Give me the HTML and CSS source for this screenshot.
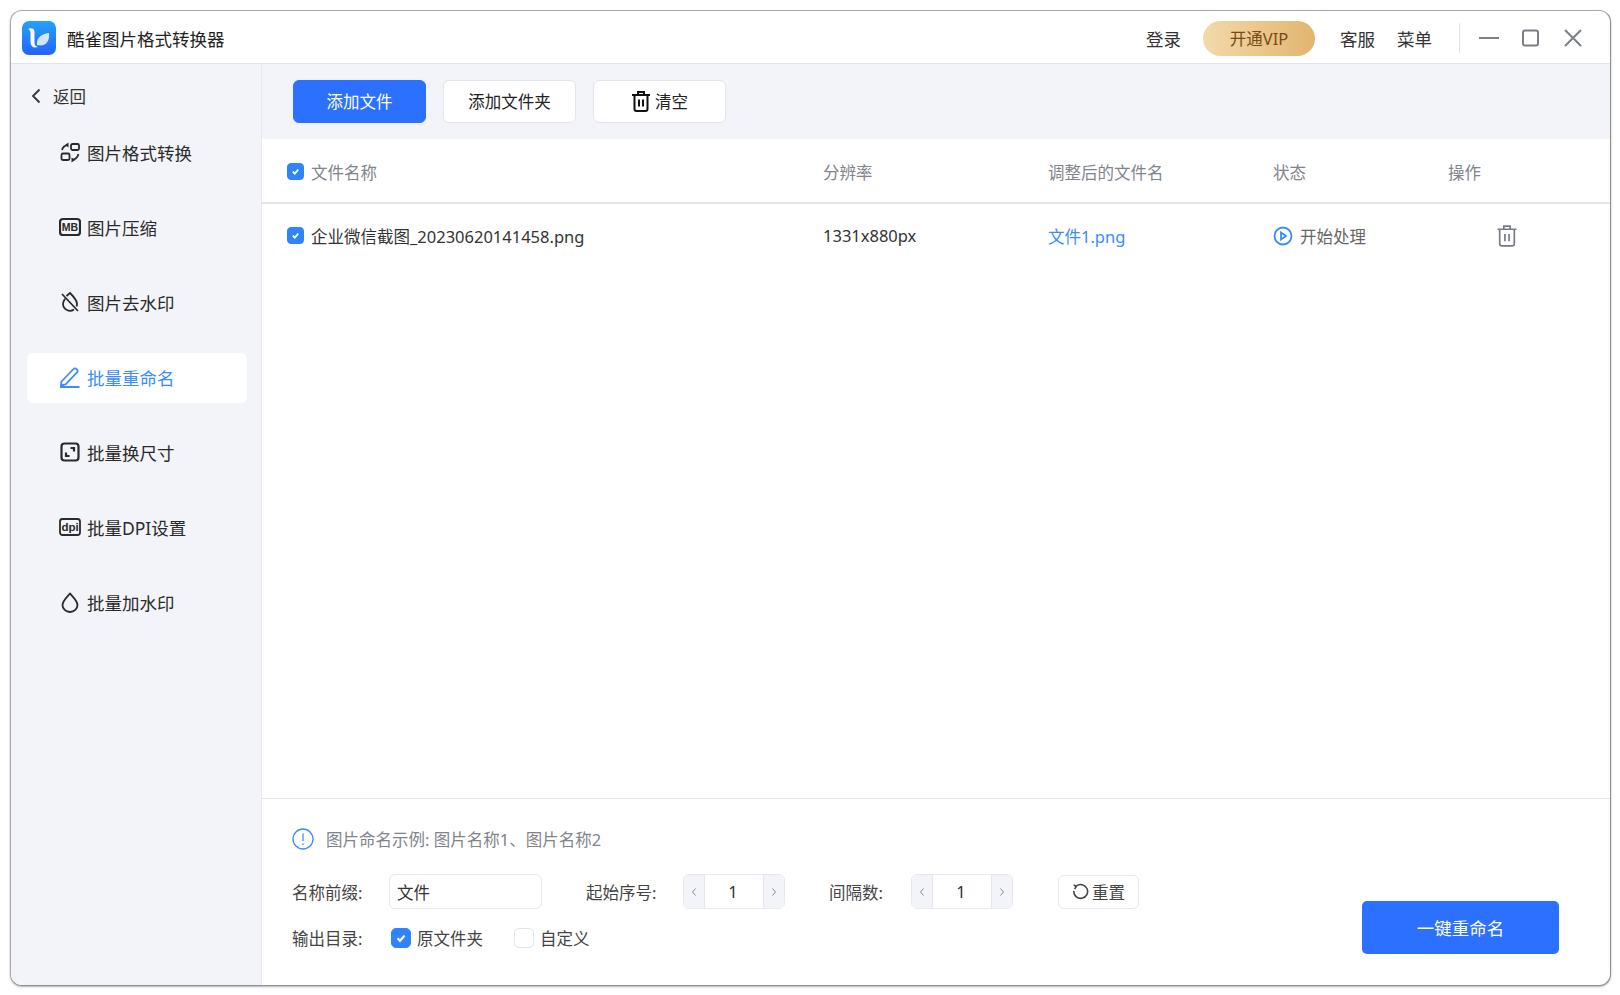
FILE: index.html
```html
<!DOCTYPE html>
<html lang="zh-CN">
<head>
<meta charset="UTF-8">
<meta name="viewport" content="width=device-width, initial-scale=1.0">
<title>酷雀图片格式转换器</title>
<link rel="stylesheet" href="styles.css">
</head>
<body>
<div class="window">
    <header class="titlebar">
        <svg class="logo" viewBox="0 0 34 34">
            <defs>
                <linearGradient id="logoBg" x1="0" y1="0" x2="0" y2="1">
                    <stop offset="0" stop-color="#23a2fb"/>
                    <stop offset="1" stop-color="#2463fb"/>
                </linearGradient>
            </defs>
            <rect width="34" height="34" rx="7" fill="url(#logoBg)"/>
            <path d="M6 8c3-1.500 6-.5 6.500 2.500v11c0 2.500 1.500 4 3.500 4.500-4 1.500-7.500-.5-7.500-5V12c0-2-1-3.500-2.500-4z" fill="#fff"/>
            <path d="M15 24c-1-6 3-11 12-12 1 8-3 14-12 12z" fill="#fff" fill-opacity=".8"/>
        </svg>
        <span class="app-name">酷雀图片格式转换器</span>
        <nav class="title-actions">
            <span class="login">登录</span>
            <span class="vip">开通VIP</span>
            <span class="service">客服</span>
            <span class="menu">菜单</span>
        </nav>
        <div class="win-controls">
            <svg class="win-icon" viewBox="0 0 20 20"><path d="M0 10h20"/></svg>
            <svg class="win-icon" viewBox="0 0 20 20"><rect x="2" y="2.500" width="15" height="15" rx="2"/></svg>
            <svg class="win-icon" viewBox="0 0 20 20"><path d="M2 2l16 16M18 2L2 18"/></svg>
        </div>
    </header>

    <div class="body-row">
        <aside class="sidebar">
            <div class="back">
                <svg class="back-icon" viewBox="0 0 10 16"><path d="M8.500 1.500L2 8l6.500 6.500"/></svg>
                <span>返回</span>
            </div>
            <ul class="side-list">
                <li class="side-item">
                    <svg class="side-icon" viewBox="0 0 22 22"><rect x="12" y="3" width="8" height="6" rx="1.500"/><rect x="2.500" y="12.500" width="8" height="6.500" rx="1.500"/><path d="M9 3.800C6 4.200 3.800 6 3 9M13 19c3-.5 5.500-2.500 6.500-6"/><path class="solid" d="M9.500 1.500v5L6 4zM12.500 16.500v5l3.500-2.500z"/></svg>
                    <span>图片格式转换</span>
                </li>
                <li class="side-item">
                    <svg class="side-icon side-icon-bold" viewBox="0 0 22 22"><rect x="1" y="3" width="20" height="16" rx="3"/><text class="mb-text" x="11" y="14.800">MB</text></svg>
                    <span>图片压缩</span>
                </li>
                <li class="side-item">
                    <svg class="side-icon" viewBox="0 0 22 22"><path d="M7.500 5L11 2c3 3 7 7 7 11a6 6 0 0 1-.5 2.500M15 18.500A7 7 0 0 1 4 13c0-2 1-3.800 2-5.300M3 3l16 17"/></svg>
                    <span>图片去水印</span>
                </li>
                <li class="side-item active">
                    <svg class="side-icon" viewBox="0 0 22 22"><path d="M2.500 15.500L14.500 3a2 2 0 0 1 3 0l.5.500a2 2 0 0 1 0 3L6.500 18.500l-4.500 1zM1 21h19.500"/></svg>
                    <span>批量重命名</span>
                </li>
                <li class="side-item">
                    <svg class="side-icon side-icon-bold" viewBox="0 0 22 22"><rect x="2.500" y="2.500" width="17" height="17" rx="3"/><path d="M11.500 7h3.500v3.500M7 11.500V15h3.500"/></svg>
                    <span>批量换尺寸</span>
                </li>
                <li class="side-item">
                    <svg class="side-icon" viewBox="0 0 22 22"><rect x="1" y="3" width="20" height="16" rx="2.500"/><text class="dpi-text" x="11" y="14.500">dpi</text></svg>
                    <span>批量DPI设置</span>
                </li>
                <li class="side-item">
                    <svg class="side-icon" viewBox="0 0 22 22"><path d="M11 2.500c3.500 4 7.500 7.500 7.500 11.500a7.500 7 0 0 1-15 0c0-4 4-7.500 7.500-11.500z"/></svg>
                    <span>批量加水印</span>
                </li>
            </ul>
        </aside>

        <main class="content">
            <div class="toolbar">
                <button class="btn btn-primary">添加文件</button>
                <button class="btn">添加文件夹</button>
                <button class="btn btn-clear">
                    <svg class="trash-dark" viewBox="0 0 20 22"><path d="M1 5h18M7 5V2h6v3M3.500 5v14a2 2 0 0 0 2 2h9a2 2 0 0 0 2-2V5M8 9.500v7M12 9.500v7"/></svg>
                    清空
                </button>
            </div>

            <div class="table-head">
                <div class="cell-name">
                    <span class="check checked"><svg viewBox="0 0 10 10"><path d="M2.500 5.200l1.800 1.800 3.200-3.700"/></svg></span>
                    文件名称
                </div>
                <div>分辨率</div>
                <div>调整后的文件名</div>
                <div>状态</div>
                <div>操作</div>
            </div>
            <div class="table-row">
                <div class="cell-name">
                    <span class="check checked"><svg viewBox="0 0 10 10"><path d="M2.500 5.200l1.800 1.800 3.200-3.700"/></svg></span>
                    企业微信截图_20230620141458.png
                </div>
                <div>1331x880px</div>
                <div class="new-name">文件1.png</div>
                <div class="status">
                    <svg class="play" viewBox="0 0 20 20"><circle cx="10" cy="10" r="8.500"/><path d="M8 6.500l5 3.500-5 3.500z"/></svg>
                    开始处理
                </div>
                <div class="cell-op">
                    <svg class="trash-grey" viewBox="0 0 20 22"><path d="M1 5h18M7 5V2h6v3M3 5v14a2 2 0 0 0 2 2h10a2 2 0 0 0 2-2V5M8 9.500v7M12 9.500v7"/></svg>
                </div>
            </div>

            <footer class="panel">
                <div class="panel-left">
                    <div class="hint">
                        <svg class="hint-icon" viewBox="0 0 22 22"><circle cx="11" cy="11" r="10"/><path d="M11 5.500v7.500M11 15.500v1.500"/></svg>
                        图片命名示例: 图片名称1、图片名称2
                    </div>
                    <div class="form-row">
                        <label class="form-label">名称前缀:</label>
                        <div class="text-input">文件</div>
                        <label class="form-label label-start">起始序号:</label>
                        <div class="stepper">
                            <span class="step"><svg viewBox="0 0 6 10"><path d="M4.500 1.500L1.500 5l3 3.500"/></svg></span>
                            <span class="step-value">1</span>
                            <span class="step"><svg viewBox="0 0 6 10"><path d="M1.500 1.500l3 3.500-3 3.500"/></svg></span>
                        </div>
                        <label class="form-label label-gap">间隔数:</label>
                        <div class="stepper">
                            <span class="step"><svg viewBox="0 0 6 10"><path d="M4.500 1.500L1.500 5l3 3.500"/></svg></span>
                            <span class="step-value">1</span>
                            <span class="step"><svg viewBox="0 0 6 10"><path d="M1.500 1.500l3 3.500-3 3.500"/></svg></span>
                        </div>
                        <button class="reset">
                            <svg class="reset-icon" viewBox="0 0 16 16"><path d="M4 3a6.500 6.500 0 1 1-2.300 4.500M1.500 1.800L4 3.200 2.500 5.800"/></svg>
                            重置
                        </button>
                    </div>
                    <div class="form-row output-row">
                        <label class="form-label">输出目录:</label>
                        <span class="check check-big checked"><svg viewBox="0 0 10 10"><path d="M2.500 5.200l1.800 1.800 3.200-3.700"/></svg></span>
                        <span class="opt-text">原文件夹</span>
                        <span class="check check-big"></span>
                        <span class="opt-text">自定义</span>
                    </div>
                </div>
                <button class="run">一键重命名</button>
            </footer>
        </main>
    </div>
</div>
</body>
</html>
```

FILE: styles.css
```css
* {
    box-sizing: border-box;
}

body {
    margin: 0;
    padding: 10px 9px 9px 10px;
    height: 995px;
    background-color: #fff;
    font-family: "Noto Sans", "Noto Sans CJK SC", sans-serif;
    font-size: 16.5px;
    color: #333;
    overflow: hidden;
}

svg {
    display: block;
    flex: none;
    fill: none;
    stroke: currentColor;
}

button {
    font-family: inherit;
}

.window {
    height: 100%;
    border: 1px solid #a8a8a8;
    border-bottom-color: #8f8f8f;
    border-right-color: #8f8f8f;
    border-radius: 12px;
    overflow: hidden;
    display: flex;
    flex-direction: column;
    background-color: #fff;
    box-shadow: 0 1px 2px rgba(0, 0, 0, .3);
}

/* title bar */
.titlebar {
    height: 53px;
    flex: none;
    display: flex;
    align-items: center;
    padding: 2px 0 0 11px;
    border-bottom: 1px solid #e2e3ec;
}

.logo {
    width: 34px;
    height: 34px;
    stroke: none;
}

.app-name {
    margin-left: 11px;
    font-size: 17.5px;
    color: #222;
}

.title-actions {
    margin-left: auto;
    display: flex;
    align-items: center;
    font-size: 17.5px;
    color: #333;
}

.vip {
    width: 112px;
    height: 35px;
    margin: 0 25px 0 22px;
    border-radius: 18px;
    background: linear-gradient(90deg, #f3d9ab, #e2b56f);
    color: #7a4a16;
    font-size: 16.5px;
    display: flex;
    align-items: center;
    justify-content: center;
}

.menu {
    margin-left: 22px;
}

.win-controls {
    display: flex;
    align-items: center;
    gap: 22px;
    margin-left: 27px;
    margin-right: 27px;
    padding-left: 19px;
    height: 30px;
    border-left: 1px solid #dfe0e6;
    color: #7c7f88;
}

.win-icon {
    width: 20px;
    height: 20px;
    stroke-width: 2;
}

.body-row {
    flex: 1;
    display: flex;
    min-height: 0;
}

/* sidebar */
.sidebar {
    width: 251px;
    flex: none;
    background-color: #f3f4f9;
    border-right: 1px solid #e6e7f0;
    padding: 0 14px 0 16px;
}

.back {
    height: 64px;
    padding: 0 0 0 4px;
    display: flex;
    align-items: center;
    gap: 12px;
    color: #333;
}

.back-icon {
    width: 10px;
    height: 16px;
    stroke-width: 1.800;
}

.side-list {
    list-style: none;
    margin: 0;
    padding: 0;
    display: flex;
    flex-direction: column;
    gap: 25px;
}

.side-item {
    height: 50px;
    padding: 0 0 2px 32px;
    display: flex;
    align-items: center;
    gap: 6px;
    font-size: 17.5px;
    color: #2a2a2a;
    border-radius: 6px;
}

.side-item.active {
    background-color: #fff;
    color: #3a8bff;
}

.side-icon {
    width: 22px;
    height: 22px;
    stroke-width: 1.800;
}

.side-icon-bold {
    stroke-width: 2.200;
}

.solid {
    fill: currentColor;
    stroke: none;
}

.mb-text,
.dpi-text {
    font-family: "Liberation Sans", sans-serif;
    text-anchor: middle;
    fill: currentColor;
    stroke: none;
}

.mb-text {
    font-size: 10.500px;
    font-weight: 700;
}

.dpi-text {
    font-size: 11.500px;
    font-weight: 700;
}

/* main */
.content {
    flex: 1;
    min-width: 0;
    display: flex;
    flex-direction: column;
}

.toolbar {
    height: 75px;
    flex: none;
    padding: 16px 0 0 31px;
    background-color: #f3f4f9;
    display: flex;
    align-items: flex-start;
    gap: 17px;
}

.btn {
    width: 133px;
    height: 43px;
    border: 1.500px solid #e3e4ed;
    border-radius: 6px;
    background-color: #fff;
    color: #222;
    font-size: 16.5px;
    display: flex;
    align-items: center;
    justify-content: center;
    gap: 4px;
    padding: 0 0 1px;
}

.btn-primary {
    border-color: #2b70ff;
    background-color: #2b70ff;
    color: #fff;
}

.trash-dark {
    width: 20px;
    height: 22px;
    stroke-width: 2;
    color: #111;
}

.table-head,
.table-row {
    display: grid;
    grid-template-columns: 536px 225px 225px 175px 1fr;
    align-items: center;
    padding-left: 25px;
    flex: none;
}

.table-head {
    height: 65px;
    padding-top: 2px;
    border-bottom: 2px solid #e3e3ee;
    color: #82848c;
}

.table-row {
    height: 67px;
    padding-bottom: 4px;
    color: #333;
}

.cell-name {
    display: flex;
    align-items: center;
    gap: 7px;
}

.check {
    width: 17px;
    height: 17px;
    flex: none;
    border-radius: 4px;
    border: 1.500px solid #e3e3ee;
    display: flex;
    align-items: center;
    justify-content: center;
    color: #fff;
}

.check svg {
    width: 11px;
    height: 11px;
    stroke-width: 1.600;
}

.check.checked {
    background-color: #2f83fb;
    border-color: #2f83fb;
}

.check-big {
    width: 20px;
    height: 20px;
    border-radius: 5px;
}

.check-big svg {
    width: 14px;
    height: 14px;
}

.new-name {
    color: #3a8bff;
}

.status {
    display: flex;
    align-items: center;
    gap: 7px;
    color: #666;
}

.play {
    width: 20px;
    height: 20px;
    stroke-width: 1.800;
    color: #3a8bff;
}

.cell-op {
    padding-left: 48px;
}

.trash-grey {
    width: 22px;
    height: 23px;
    stroke-width: 1.600;
    color: #777a84;
}

/* bottom panel */
.panel {
    flex: none;
    height: 187px;
    margin-top: auto;
    border-top: 1px solid #e6e7ee;
    padding: 29px 51px 31px 30px;
    display: flex;
    justify-content: space-between;
}

.panel-left {
    display: flex;
    flex-direction: column;
}

.hint {
    display: flex;
    align-items: center;
    gap: 12px;
    height: 22px;
    color: #82848c;
}

.hint-icon {
    width: 22px;
    height: 22px;
    stroke-width: 1.300;
    color: #3a8bff;
}

.form-row {
    display: flex;
    align-items: center;
    margin-top: 24px;
    height: 35px;
}

.output-row {
    margin-top: 17px;
    height: 24px;
}

.form-label {
    width: 97px;
    flex: none;
    color: #444;
}

.text-input {
    width: 153px;
    height: 35px;
    border: 1.500px solid #e8e8f0;
    border-radius: 6px;
    padding-left: 7px;
    display: flex;
    align-items: center;
    color: #333;
}

.label-start {
    margin-left: 44px;
}

.label-gap {
    width: 82px;
    margin-left: 44px;
}

.stepper {
    width: 102px;
    height: 35px;
    border: 1.500px solid #e8e8f0;
    border-radius: 6px;
    overflow: hidden;
    display: flex;
    flex: none;
}

.step {
    width: 20px;
    flex: none;
    background-color: #f3f4f9;
    color: #888;
    display: flex;
    align-items: center;
    justify-content: center;
}

.step svg {
    width: 6px;
    height: 10px;
    stroke-width: 1;
}

.step-value {
    flex: 1;
    display: flex;
    align-items: center;
    justify-content: center;
    padding-right: 2px;
    border-left: 1.500px solid #e8e8f0;
    border-right: 1.500px solid #e8e8f0;
    color: #333;
}

.reset {
    width: 81px;
    height: 34px;
    margin-left: 45px;
    border: 1.500px solid #e8e8f0;
    border-radius: 6px;
    background-color: #fff;
    color: #444;
    font-size: 16.5px;
    display: flex;
    align-items: center;
    justify-content: center;
    gap: 3px;
    padding: 0;
}

.reset-icon {
    width: 17px;
    height: 17px;
    stroke-width: 1.500;
}

.output-row .check {
    margin-left: 2px;
}

.opt-text {
    margin-left: 6px;
    margin-right: 31px;
    color: #444;
}

.opt-text + .check {
    margin-left: 0;
}

.run {
    align-self: flex-end;
    width: 197px;
    height: 53px;
    border: none;
    border-radius: 5px;
    background-color: #2b70ff;
    color: #fff;
    font-size: 17.5px;
}
```
